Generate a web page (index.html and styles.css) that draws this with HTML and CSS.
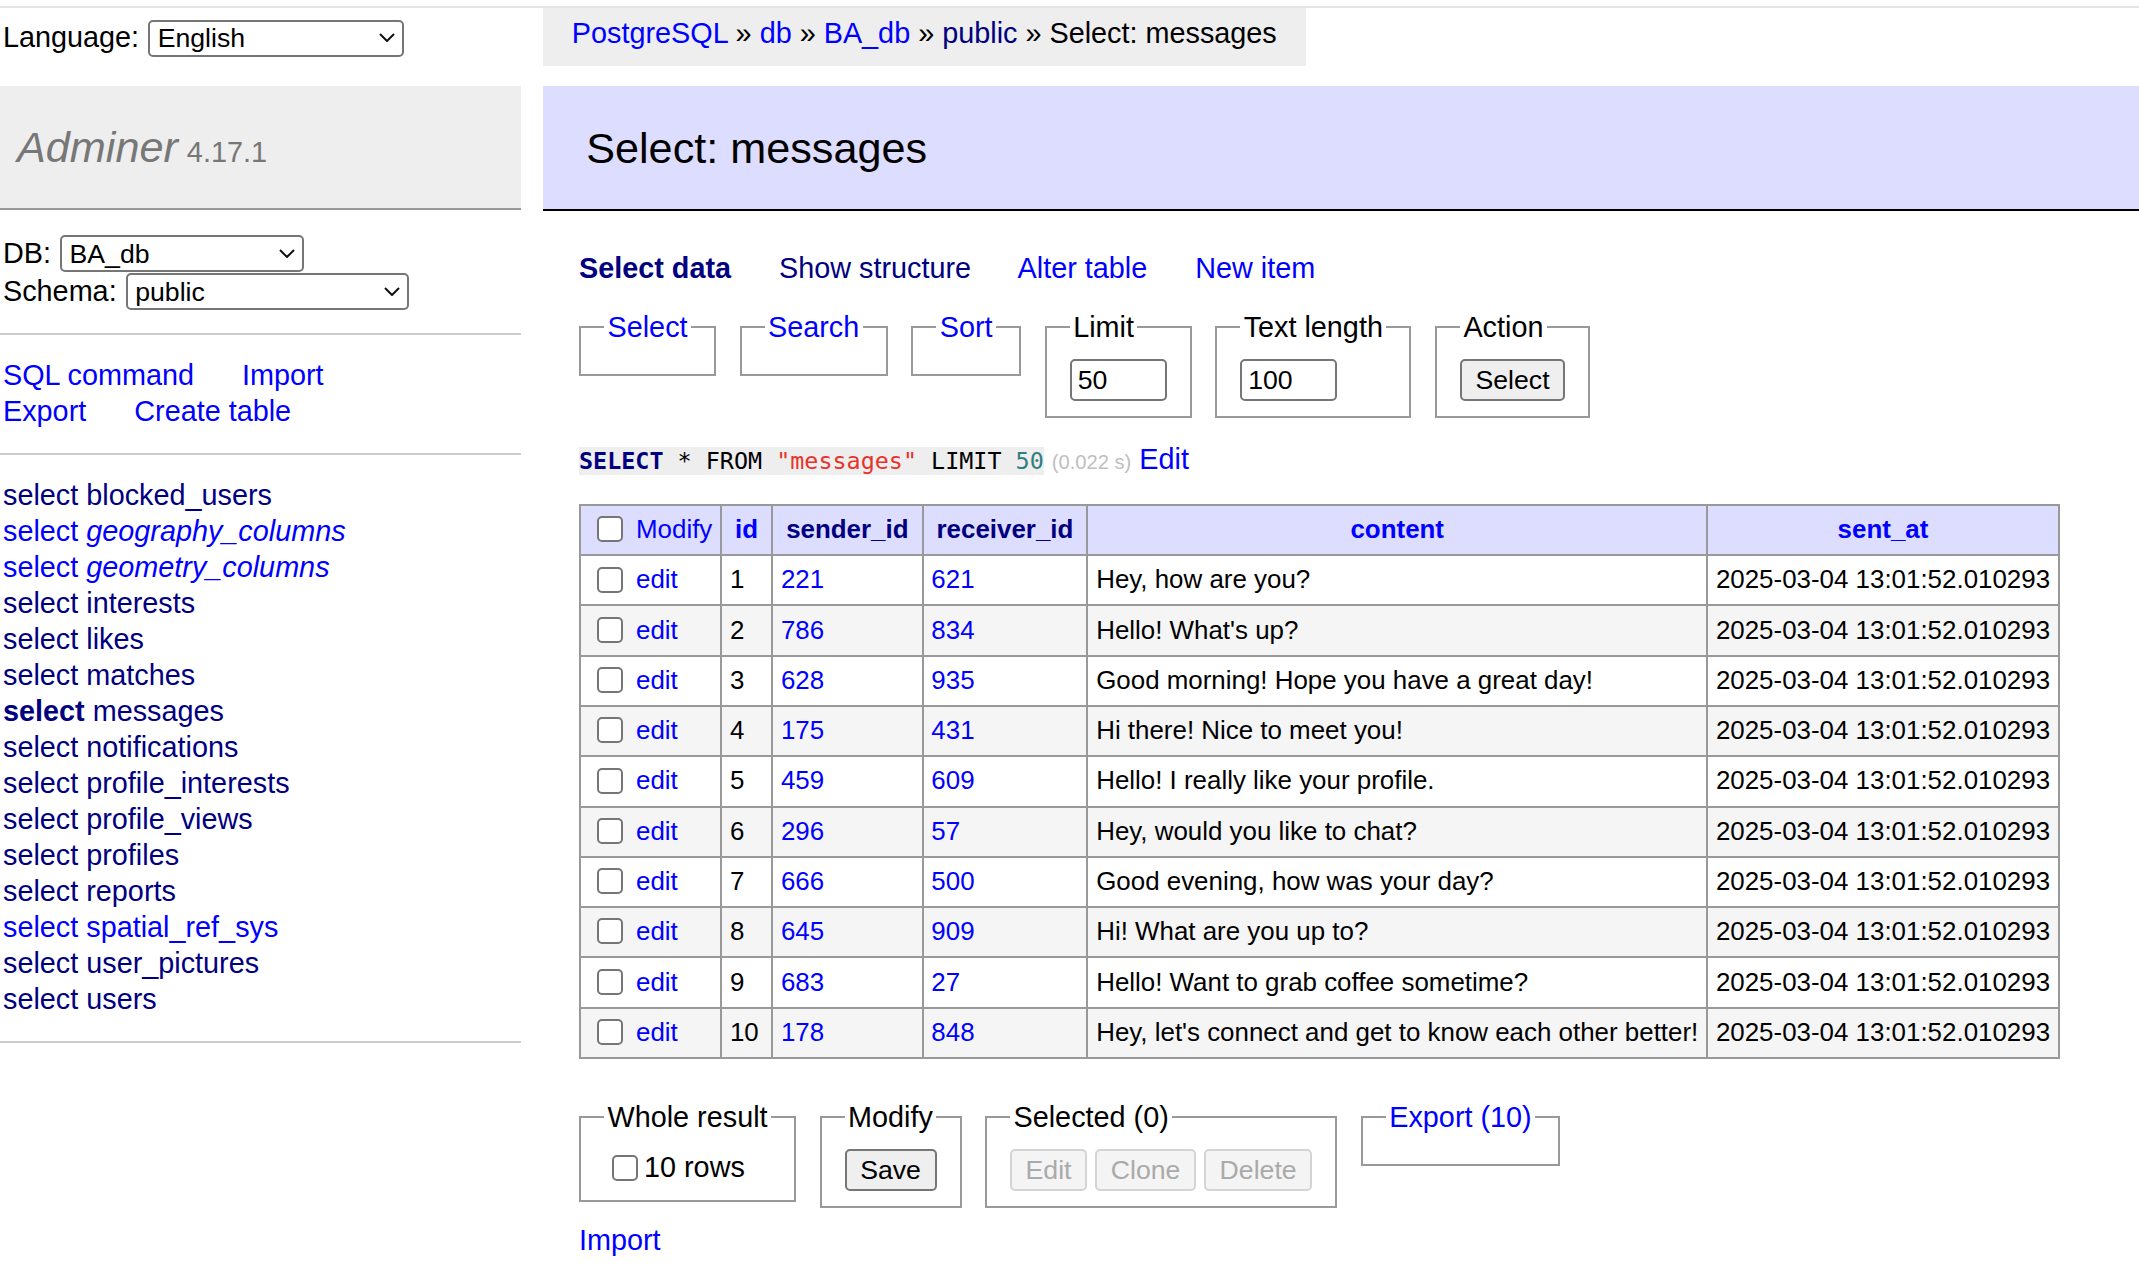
FILE: index.html
```html
<!DOCTYPE html>
<html lang="en">
<head>
<meta charset="utf-8">
<title>Select: messages - BA_db - Adminer</title>
<link rel="stylesheet" href="styles.css">
</head>
<body>
<div class="topline"></div>
<div class="page">
  <aside class="menu">
    <form class="lang">
      <span class="lbl">Language:</span>
      <span class="sel sel-lang">
        <select><option>English</option></select>
        <svg class="chev" viewBox="0 0 16 9" width="16" height="9"><path d="M1 1 L8 8 L15 1" fill="none" stroke="#111" stroke-width="2"/></svg>
      </span>
    </form>
    <h1 class="brand"><a class="logo" href="#">Adminer</a> <span class="version">4.17.1</span></h1>
    <form class="dbs">
      <div class="dbrow">
        <span class="lbl">DB:</span>
        <span class="sel sel-db">
          <select><option>BA_db</option></select>
          <svg class="chev" viewBox="0 0 16 9" width="16" height="9"><path d="M1 1 L8 8 L15 1" fill="none" stroke="#111" stroke-width="2"/></svg>
        </span>
      </div>
      <div class="dbrow">
        <span class="lbl">Schema:</span>
        <span class="sel sel-schema">
          <select><option>public</option></select>
          <svg class="chev" viewBox="0 0 16 9" width="16" height="9"><path d="M1 1 L8 8 L15 1" fill="none" stroke="#111" stroke-width="2"/></svg>
        </span>
      </div>
    </form>
    <p class="sidelinks">
      <a href="#">SQL command</a> <a href="#">Import</a><br>
      <a href="#">Export</a> <a href="#">Create table</a>
    </p>
    <ul class="tables">
      <li><a class="v" href="#">select</a> <a class="v" href="#">blocked_users</a></li>
      <li><a href="#">select</a> <a class="view" href="#">geography_columns</a></li>
      <li><a href="#">select</a> <a class="view" href="#">geometry_columns</a></li>
      <li><a class="v" href="#">select</a> <a class="v" href="#">interests</a></li>
      <li><a class="v" href="#">select</a> <a class="v" href="#">likes</a></li>
      <li><a class="v" href="#">select</a> <a class="v" href="#">matches</a></li>
      <li><a class="v active" href="#">select</a> <a class="v" href="#">messages</a></li>
      <li><a class="v" href="#">select</a> <a class="v" href="#">notifications</a></li>
      <li><a class="v" href="#">select</a> <a class="v" href="#">profile_interests</a></li>
      <li><a class="v" href="#">select</a> <a class="v" href="#">profile_views</a></li>
      <li><a class="v" href="#">select</a> <a class="v" href="#">profiles</a></li>
      <li><a class="v" href="#">select</a> <a class="v" href="#">reports</a></li>
      <li><a href="#">select</a> <a href="#">spatial_ref_sys</a></li>
      <li><a class="v" href="#">select</a> <a class="v" href="#">user_pictures</a></li>
      <li><a class="v" href="#">select</a> <a class="v" href="#">users</a></li>
    </ul>
  </aside>

  <main class="main">
    <div class="crumbrow">
      <p class="breadcrumb"><a href="#">PostgreSQL</a> » <a href="#">db</a> » <a href="#">BA_db</a> » <a class="v" href="#">public</a> » Select: messages</p>
    </div>
    <h2 class="title">Select: messages</h2>
    <div class="content">
      <p class="tabs"><a class="v active" href="#">Select data</a> <a class="v" href="#">Show structure</a> <a href="#">Alter table</a> <a href="#">New item</a></p>

      <form class="controls">
        <fieldset class="fs"><legend><a href="#">Select</a></legend></fieldset>
        <fieldset class="fs"><legend><a href="#">Search</a></legend></fieldset>
        <fieldset class="fs"><legend><a href="#">Sort</a></legend></fieldset>
        <fieldset class="fs"><legend>Limit</legend><input class="num" type="text" value="50"></fieldset>
        <fieldset class="fs"><legend>Text length</legend><input class="num" type="text" value="100"></fieldset>
        <fieldset class="fs"><legend>Action</legend><button class="btn" type="button">Select</button></fieldset>
      </form>

      <p class="query"><code class="sql"><span class="kw">SELECT</span> * FROM <span class="str">"messages"</span> LIMIT <span class="numlit">50</span></code> <span class="time">(0.022 s)</span> <a href="#">Edit</a></p>

      <table class="data">
        <thead>
          <tr>
            <td class="modcol"><input type="checkbox" class="cb"> <a href="#">Modify</a></td>
            <th><a href="#">id</a></th>
            <th><a class="v" href="#">sender_id</a></th>
            <th><a class="v" href="#">receiver_id</a></th>
            <th><a href="#">content</a></th>
            <th><a href="#">sent_at</a></th>
          </tr>
        </thead>
        <tbody>
          <tr><td><input type="checkbox" class="cb"> <a href="#">edit</a></td><td>1</td><td><a href="#">221</a></td><td><a href="#">621</a></td><td>Hey, how are you?</td><td>2025-03-04 13:01:52.010293</td></tr>
          <tr><td><input type="checkbox" class="cb"> <a href="#">edit</a></td><td>2</td><td><a href="#">786</a></td><td><a href="#">834</a></td><td>Hello! What's up?</td><td>2025-03-04 13:01:52.010293</td></tr>
          <tr><td><input type="checkbox" class="cb"> <a href="#">edit</a></td><td>3</td><td><a href="#">628</a></td><td><a href="#">935</a></td><td>Good morning! Hope you have a great day!</td><td>2025-03-04 13:01:52.010293</td></tr>
          <tr><td><input type="checkbox" class="cb"> <a href="#">edit</a></td><td>4</td><td><a href="#">175</a></td><td><a href="#">431</a></td><td>Hi there! Nice to meet you!</td><td>2025-03-04 13:01:52.010293</td></tr>
          <tr><td><input type="checkbox" class="cb"> <a href="#">edit</a></td><td>5</td><td><a href="#">459</a></td><td><a href="#">609</a></td><td>Hello! I really like your profile.</td><td>2025-03-04 13:01:52.010293</td></tr>
          <tr><td><input type="checkbox" class="cb"> <a href="#">edit</a></td><td>6</td><td><a href="#">296</a></td><td><a href="#">57</a></td><td>Hey, would you like to chat?</td><td>2025-03-04 13:01:52.010293</td></tr>
          <tr><td><input type="checkbox" class="cb"> <a href="#">edit</a></td><td>7</td><td><a href="#">666</a></td><td><a href="#">500</a></td><td>Good evening, how was your day?</td><td>2025-03-04 13:01:52.010293</td></tr>
          <tr><td><input type="checkbox" class="cb"> <a href="#">edit</a></td><td>8</td><td><a href="#">645</a></td><td><a href="#">909</a></td><td>Hi! What are you up to?</td><td>2025-03-04 13:01:52.010293</td></tr>
          <tr><td><input type="checkbox" class="cb"> <a href="#">edit</a></td><td>9</td><td><a href="#">683</a></td><td><a href="#">27</a></td><td>Hello! Want to grab coffee sometime?</td><td>2025-03-04 13:01:52.010293</td></tr>
          <tr><td><input type="checkbox" class="cb"> <a href="#">edit</a></td><td>10</td><td><a href="#">178</a></td><td><a href="#">848</a></td><td>Hey, let's connect and get to know each other better!</td><td>2025-03-04 13:01:52.010293</td></tr>
        </tbody>
      </table>

      <form class="footer">
        <fieldset class="fs"><legend>Whole result</legend><label class="chk"><input type="checkbox" class="cb cb-flush">10 rows</label></fieldset>
        <fieldset class="fs"><legend>Modify</legend><button class="btn" type="button">Save</button></fieldset>
        <fieldset class="fs"><legend>Selected (0)</legend><button class="btn" type="button" disabled>Edit</button> <button class="btn" type="button" disabled>Clone</button> <button class="btn" type="button" disabled>Delete</button></fieldset>
        <fieldset class="fs"><legend><a href="#">Export (10)</a></legend></fieldset>
      </form>

      <div class="importrow"><a href="#">Import</a></div>
    </div>
  </main>
</div>
</body>
</html>
```

FILE: styles.css
```css
html, body {
  margin: 0;
  padding: 0;
  background: #fff;
}

body {
  color: #000;
  font-family: "Liberation Sans", Arial, sans-serif;
  font-size: 28.8px;
  line-height: 36px;
  overflow: hidden;
}

a {
  color: #0000ff;
  text-decoration: none;
}

a.v {
  color: #000080;
}

.topline {
  height: 2px;
  margin-top: 6px;
  background: #e4e4e4;
}

.page {
  display: flex;
  align-items: flex-start;
}

/* ---------- sidebar ---------- */
.menu {
  width: 521px;
  flex: none;
}

.lang {
  display: flex;
  align-items: center;
  gap: 9px;
  height: 37px;
  padding: 11px 0 30px 3px;
  margin: 0;
}

.lbl {
  line-height: 38px;
}

.lang .lbl {
  position: relative;
  top: -1px;
}

.sel {
  position: relative;
  display: inline-block;
  height: 37px;
}

.sel select {
  appearance: none;
  -webkit-appearance: none;
  box-sizing: border-box;
  height: 37px;
  width: 100%;
  margin: 0;
  padding: 0 30px 0 7.5px;
  border: 2px solid #767676;
  border-radius: 5px;
  background: #fff;
  color: #000;
  font-family: "Liberation Sans", Arial, sans-serif;
  font-size: 26.67px;
}

.sel .chev {
  position: absolute;
  right: 9px;
  top: 14px;
  pointer-events: none;
}

.sel-lang { width: 256px; }
.sel-db { width: 244px; }
.sel-schema { width: 283px; }

.brand {
  margin: 0;
  padding: 34px 0 34px 17px;
  height: 54px;
  line-height: 54px;
  font-size: 43.2px;
  font-weight: normal;
  background: #eee;
  border-bottom: 2px solid #999;
  color: #777;
  white-space: nowrap;
}

.logo {
  color: #777;
  font-style: italic;
}

.version {
  color: #777;
  font-size: 28.9px;
  margin-left: -3px;
}

.dbs {
  margin: 0;
  padding: 24px 0 23px 3px;
  border-bottom: 2px solid #ccc;
}

.dbrow {
  display: flex;
  align-items: center;
  gap: 9px;
  height: 38px;
}

.sidelinks {
  margin: 0;
  padding: 22px 0 24px 3px;
  border-bottom: 2px solid #ccc;
  white-space: nowrap;
}

.sidelinks a,
.tabs a {
  margin-right: 40px;
}

.tables {
  list-style: none;
  margin: 0;
  padding: 22px 0 24px 3px;
  border-bottom: 2px solid #ccc;
  white-space: nowrap;
}

.tables .view {
  font-style: italic;
}

.active {
  font-weight: bold;
}

/* ---------- main ---------- */
.main {
  flex: 1;
  margin-left: 22px;
  min-width: 0;
}

.crumbrow {
  display: flex;
}

.breadcrumb {
  margin: 0;
  height: 58px;
  line-height: 51.8px;
  padding: 0 28.8px;
  background: #eee;
  white-space: nowrap;
}

.title {
  margin: 20px 0 0;
  padding: 34.56px 43.2px;
  font-size: 43.2px;
  line-height: 54px;
  font-weight: normal;
  color: #000;
  background: #ddf;
  border-bottom: 2px solid #000;
}

.content {
  padding-left: 36px;
  padding-top: 39px;
}

.tabs {
  margin: 0;
  white-space: nowrap;
}

.controls,
.footer {
  display: flex;
  align-items: flex-start;
  gap: 23.5px;
  margin: 23px 0 0;
}

.footer {
  margin-top: 40px;
}

.fs {
  margin: 0;
  padding: 14.4px 23px;
  border: 2px solid #999;
  min-width: 0;
}

.fs legend {
  padding: 0 3.5px;
  line-height: 36px;
}

.num {
  box-sizing: border-box;
  width: 97px;
  height: 42px;
  margin: 0;
  padding: 0 6px;
  border: 2px solid #767676;
  border-radius: 5px;
  font-family: "Liberation Sans", Arial, sans-serif;
  font-size: 26.67px;
  color: #000;
  vertical-align: middle;
}

.btn {
  box-sizing: border-box;
  height: 42px;
  margin: 0;
  padding: 0 13.6px;
  border: 2px solid #767676;
  border-radius: 5px;
  background: #efefef;
  font-family: "Liberation Sans", Arial, sans-serif;
  font-size: 26.67px;
  color: #000;
  vertical-align: middle;
}

.btn:disabled {
  background: #f4f4f4;
  border-color: #d4d4d4;
  color: #aaa;
}

.query {
  margin: 23px 0 0;
  white-space: nowrap;
}

.sql {
  font-family: "DejaVu Sans Mono", monospace;
  font-size: 23.4px;
  background: #eee;
}

.kw {
  color: #000080;
  font-weight: bold;
}

.str {
  color: #e8332a;
}

.numlit {
  color: #2f7f7f;
}

.time {
  color: #c0c0c0;
  font-size: 20.16px;
}

/* ---------- data table ---------- */
.data {
  margin-top: 24px;
  border-collapse: collapse;
  font-size: 25.92px;
  line-height: 37.9px;
}

.data td,
.data th {
  border: 2px solid #999;
  padding: 5.2px 7.8px;
  white-space: nowrap;
  text-align: left;
}

.data thead td,
.data thead th {
  background: #ddf;
}

.data thead th {
  text-align: center;
  padding: 5.2px 13px;
  font-weight: bold;
}

.data tbody tr:nth-child(2n) td {
  background: #f5f5f5;
}

.cb {
  appearance: none;
  -webkit-appearance: none;
  box-sizing: border-box;
  width: 26px;
  height: 26px;
  margin: 0 6px 0 8px;
  border: 2px solid #767676;
  border-radius: 5px;
  background: #fff;
  vertical-align: middle;
  position: relative;
  top: -2px;
}

.chk {
  white-space: nowrap;
}

.cb-flush {
  margin: 0 6px 0 8px;
}

.importrow {
  margin-top: 14.4px;
}
```
